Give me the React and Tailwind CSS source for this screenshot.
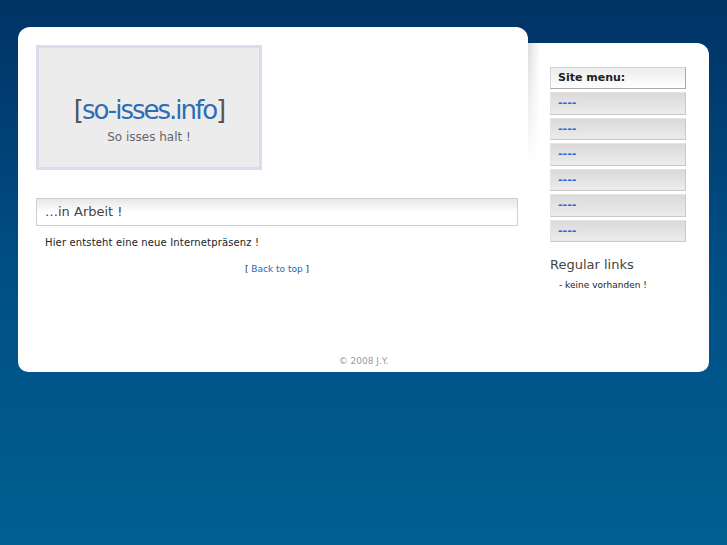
import React from 'react';

const menuItems = ['----', '----', '----', '----', '----', '----'];

const App = () => {
    return (
        <div className="min-h-[545px] bg-gradient-to-b from-[#003366] via-[#004f85] to-[#005f92] pt-[27px] pl-[18px] font-['DejaVu_Sans',sans-serif]">
            <div className="w-[691px] rounded-b-[10px] overflow-hidden">
                <div className="flex">
                    {/* Main column */}
                    <div className="w-[510px] bg-white rounded-t-[12px] pl-[18px] pt-[18px] pr-[10px] h-[323px]">
                        <div className="w-[226px] h-[125px] border-[3px] border-[#dcdcec] bg-[#ececec] flex flex-col items-center pt-[46px]">
                            <div className="text-[26px] leading-[32px] tracking-[-2px] text-[#2d6db4]">
                                <span className="text-[#555]">[</span>so-isses.info<span className="text-[#555]">]</span>
                            </div>
                            <div className="text-[12px] leading-[20px] text-[#666] mt-[1px]">So isses halt !</div>
                        </div>

                        <div className="mt-[28px] w-[482px] h-[28px] border border-[#cfcfcf] bg-gradient-to-b from-[#e6e6e6] via-white to-white flex items-center px-[8px] text-[13px] text-[#444]">
                            …in Arbeit !
                        </div>

                        <p className="mt-[9px] pl-[9px] text-[10px] leading-[15px] tracking-[0.15px] text-[#222]">Hier entsteht eine neue Internetpräsenz !</p>

                        <p className="mt-[12px] text-center text-[9px] leading-[14px] text-[#333]">
                            [ <a href="#" className="text-[#2266bb]">Back to top</a> ]
                        </p>
                    </div>

                    {/* Sidebar */}
                    <div className="w-[181px] mt-[16px] bg-white rounded-tr-[12px] flex">
                        <div className="w-[12px] h-[120px] bg-[linear-gradient(to_bottom,transparent,white),linear-gradient(to_right,#dcdcdc,white)]"></div>
                        <div className="pl-[10px] pt-[24px]">
                            <div className="w-[136px] h-[22px] border border-[#d4d4d4] border-r-[#aaa] border-b-[#aaa] bg-gradient-to-b from-[#ececec] to-white flex items-center px-[7px] text-[11px] font-bold text-[#222]">
                                Site menu:
                            </div>
                            {menuItems.map((item, i) => (
                                <div
                                    key={i}
                                    className="mt-[3px] w-[136px] h-[22.5px] border border-[#e4e4e4] border-r-[#c8c8c8] border-b-[#c8c8c8] bg-gradient-to-b from-[#dadada] to-[#ececec] flex items-center px-[7px]"
                                >
                                    <a href="#" className="text-[11px] font-bold text-[#2266dd]">{item}</a>
                                </div>
                            ))}
                            <h3 className="mt-[14px] text-[13px] leading-[18px] text-[#444]">Regular links</h3>
                            <p className="mt-[5px] pl-[9px] text-[9px] text-[#222]">- keine vorhanden !</p>
                        </div>
                    </div>
                </div>

                {/* Footer */}
                <div className="bg-white h-[22px] text-center text-[9px] text-[#999] pt-[5px]">
                    © 2008 J.Y.
                </div>
            </div>
        </div>
    );
};

export default App;
